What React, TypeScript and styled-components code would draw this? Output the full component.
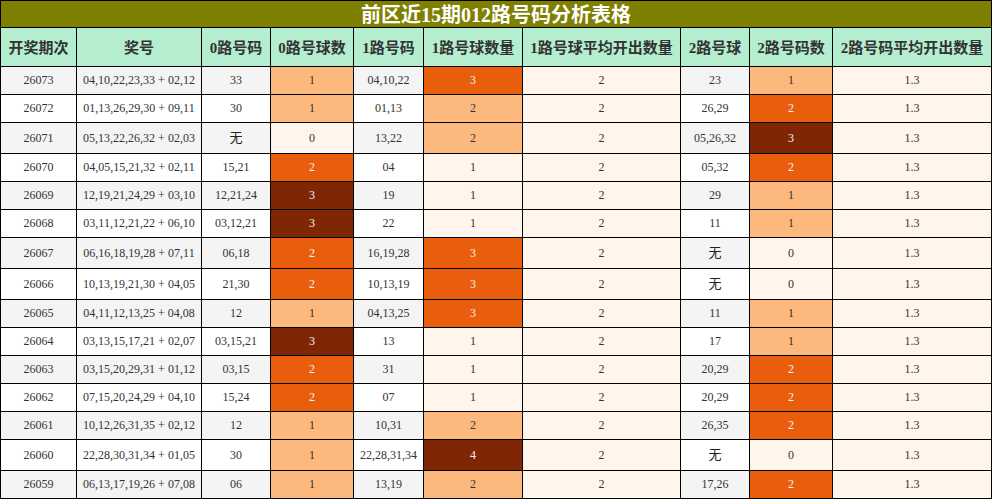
import React from "react";
import styled, { createGlobalStyle } from "styled-components";

const GlobalStyle = createGlobalStyle`
  html, body { margin: 0; padding: 0; background: #fff; }
  body { font-family: "Liberation Serif", "Noto Sans CJK SC", serif; }
`;

type RowData = [string, string, string, number, string, number, number, string, number, number];

const rows: RowData[] = [
  ["26073", "04,10,22,23,33 + 02,12", "33", 1, "04,10,22", 3, 2, "23", 1, 1.3],
  ["26072", "01,13,26,29,30 + 09,11", "30", 1, "01,13", 2, 2, "26,29", 2, 1.3],
  ["26071", "05,13,22,26,32 + 02,03", "无", 0, "13,22", 2, 2, "05,26,32", 3, 1.3],
  ["26070", "04,05,15,21,32 + 02,11", "15,21", 2, "04", 1, 2, "05,32", 2, 1.3],
  ["26069", "12,19,21,24,29 + 03,10", "12,21,24", 3, "19", 1, 2, "29", 1, 1.3],
  ["26068", "03,11,12,21,22 + 06,10", "03,12,21", 3, "22", 1, 2, "11", 1, 1.3],
  ["26067", "06,16,18,19,28 + 07,11", "06,18", 2, "16,19,28", 3, 2, "无", 0, 1.3],
  ["26066", "10,13,19,21,30 + 04,05", "21,30", 2, "10,13,19", 3, 2, "无", 0, 1.3],
  ["26065", "04,11,12,13,25 + 04,08", "12", 1, "04,13,25", 3, 2, "11", 1, 1.3],
  ["26064", "03,13,15,17,21 + 02,07", "03,15,21", 3, "13", 1, 2, "17", 1, 1.3],
  ["26063", "03,15,20,29,31 + 01,12", "03,15", 2, "31", 1, 2, "20,29", 2, 1.3],
  ["26062", "07,15,20,24,29 + 04,10", "15,24", 2, "07", 1, 2, "20,29", 2, 1.3],
  ["26061", "10,12,26,31,35 + 02,12", "12", 1, "10,31", 2, 2, "26,35", 2, 1.3],
  ["26060", "22,28,30,31,34 + 01,05", "30", 1, "22,28,31,34", 4, 2, "无", 0, 1.3],
  ["26059", "06,13,17,19,26 + 07,08", "06", 1, "13,19", 2, 2, "17,26", 2, 1.3],
];

const headers = [
  "开奖期次",
  "奖号",
  "0路号码",
  "0路号球数",
  "1路号码",
  "1路号球数量",
  "1路号球平均开出数量",
  "2路号球",
  "2路号码数",
  "2路号码平均开出数量",
];

// matplotlib "Oranges" colour scale
const ORANGES = [
  "#fff5eb", "#fee6ce", "#fdd0a2", "#fdae6b", "#fd8d3c",
  "#f16913", "#d94801", "#a63603", "#7f2704",
];

const hexToRgb = (h: string) => [1, 3, 5].map((i) => parseInt(h.slice(i, i + 2), 16));

const scale = (t: number): number[] => {
  const x = Math.max(0, Math.min(1, t)) * (ORANGES.length - 1);
  const i = Math.min(Math.floor(x), ORANGES.length - 2);
  const f = x - i;
  const a = hexToRgb(ORANGES[i]);
  const b = hexToRgb(ORANGES[i + 1]);
  return a.map((v, k) => Math.round(v + (b[k] - v) * f));
};

const luminance = (rgb: number[]) => {
  const c = rgb.map((v) => {
    const s = v / 255;
    return s <= 0.03928 ? s / 12.92 : Math.pow((s + 0.055) / 1.055, 2.4);
  });
  return 0.2126 * c[0] + 0.7152 * c[1] + 0.0722 * c[2];
};

const heatColumns = [3, 5, 6, 8, 9];

const ranges: Record<number, [number, number]> = {};
heatColumns.forEach((c) => {
  const vals = rows.map((r) => r[c] as number);
  ranges[c] = [Math.min(...vals), Math.max(...vals)];
});

const heat = (col: number, v: number) => {
  const [lo, hi] = ranges[col];
  const t = hi === lo ? 0 : (v - lo) / (hi - lo);
  const rgb = scale(t);
  return {
    bg: `rgb(${rgb.join(",")})`,
    fg: luminance(rgb) < 0.408 ? "#f1f1f1" : "#333333",
  };
};

const Sheet = styled.div`
  display: grid;
  grid-template-columns: 75px 124px 68px 82px 69px 98px 157px 68px 82px 158px;
  gap: 1px;
  padding: 1px;
  background: #000;
  width: 992px;
  box-sizing: border-box;
`;

const Title = styled.div`
  grid-column: 1 / -1;
  height: 26px;
  box-sizing: border-box;
  padding-top: 3px;
  background: #808000;
  color: #ffffff;
  font-size: 20px;
  font-weight: bold;
  line-height: 23px;
  text-align: center;
  white-space: nowrap;
`;

const Row = styled.div`
  display: contents;
`;

const HeadCell = styled.div`
  height: 38px;
  box-sizing: border-box;
  padding-top: 3px;
  background: #b4eecf;
  color: #333333;
  font-size: 15px;
  font-weight: bold;
  line-height: 35px;
  text-align: center;
  white-space: nowrap;
  overflow: hidden;
`;

const Cell = styled.div<{ $bg: string; $fg: string }>`
  min-height: 27px;
  display: flex;
  align-items: center;
  justify-content: center;
  background: ${(p) => p.$bg};
  color: ${(p) => p.$fg};
  font-size: 12px;
  white-space: nowrap;
`;

const NoneMark = styled.span`
  font-size: 13px;
  line-height: 30px;
  color: #222;
`;

const renderText = (s: string) => (s === "无" ? <NoneMark>无</NoneMark> : s);

export default function App() {
  return (
    <>
      <GlobalStyle />
      <Sheet>
        <Title>前区近15期012路号码分析表格</Title>
        <Row>
          {headers.map((h) => (
            <HeadCell key={h}>{h}</HeadCell>
          ))}
        </Row>
        {rows.map((r, ri) => {
          const base = ri % 2 === 0 ? "#f4f4f4" : "#ffffff";
          return (
            <Row key={r[0]}>
              {r.map((v, ci) => {
                if (heatColumns.includes(ci)) {
                  const { bg, fg } = heat(ci, v as number);
                  return (
                    <Cell key={ci} $bg={bg} $fg={fg}>
                      {String(v)}
                    </Cell>
                  );
                }
                return (
                  <Cell key={ci} $bg={base} $fg="#333333">
                    {renderText(String(v))}
                  </Cell>
                );
              })}
            </Row>
          );
        })}
      </Sheet>
    </>
  );
}
